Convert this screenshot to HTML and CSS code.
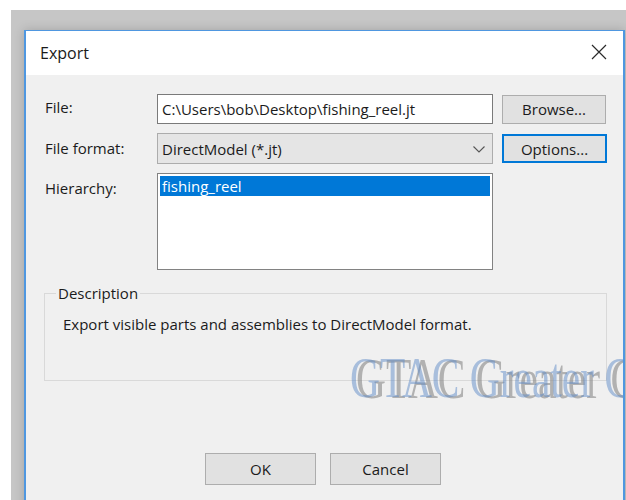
FILE: index.html
```html
<!DOCTYPE html>
<html lang="en">
<head>
<meta charset="utf-8">
<title>Export</title>
<link rel="stylesheet" href="styles.css">
</head>
<body>
<div class="desk">
  <div class="dialog">
    <div class="titlebar">
      <span class="title">Export</span>
      <svg class="close" width="16" height="16" viewBox="0 0 16 16" aria-label="Close">
        <path d="M1 1L15 15M15 1L1 15"/>
      </svg>
    </div>
    <div class="content">
      <div class="form">
        <label class="lbl lbl-file">File:</label>
        <div class="field input">C:\Users\bob\Desktop\fishing_reel.jt</div>
        <button class="btn btn-side">Browse...</button>

        <label class="lbl lbl-row">File format:</label>
        <div class="field select">
          <span>DirectModel (*.jt)</span>
          <svg class="chev" width="12" height="7" viewBox="0 0 12 7"><path d="M0.5 0.5L6 6L11.5 0.5"/></svg>
        </div>
        <button class="btn btn-side btn-focus">Options...</button>

        <label class="lbl lbl-row">Hierarchy:</label>
        <div class="field list">
          <div class="item selected">fishing_reel</div>
        </div>
      </div>

      <fieldset class="group">
        <legend>Description</legend>
        <p class="desc">Export visible parts and assemblies to DirectModel format.</p>
      </fieldset>

      <div class="actions">
        <button class="btn btn-main">OK</button>
        <button class="btn btn-main">Cancel</button>
      </div>
    </div>

    <div class="watermark wm-grey">GTAC Greater China</div>
    <div class="watermark wm-blue">GTAC Greater China</div>
  </div>
</div>
</body>
</html>
```
FILE: styles.css
```css
* {
  box-sizing: border-box;
}

html,
body {
  margin: 0;
}

body {
  width: 626px;
  height: 500px;
  overflow: hidden;
  background: #ffffff;
  font-family: "Open Sans", "Noto Sans", sans-serif;
  font-size: 15px;
  line-height: 20px;
  color: #1b1b1b;
}

/* grey desktop behind the dialog */
.desk {
  margin: 10px 0 0 11px;
  height: 490px;
  padding: 20px 1px 0 13px;
  background: #c6c6c6;
  overflow: hidden;
}

.dialog {
  position: relative;
  width: 601px;
  height: 480px;
  background: #f0f0f0;
  border: 2px solid #4f97e0;
  border-top-width: 1px;
  box-shadow: 0 0 10px rgba(0, 0, 0, 0.18);
  overflow: hidden;
}

.titlebar {
  height: 44px;
  background: #ffffff;
  display: flex;
  align-items: center;
  justify-content: space-between;
  padding: 0 16px 0 14px;
}

.title {
  font-size: 16px;
  color: #1a1a1a;
}

.close {
  fill: none;
  stroke: #2b2b2b;
  stroke-width: 1.2;
  margin-top: -2px;
}

.content {
  padding: 19px 16px 0 18px;
}

.form {
  display: grid;
  grid-template-columns: 113px 336px 114px;
  grid-template-rows: 30px 31px 97px;
  row-gap: 9px;
}

.lbl {
  padding-top: 5px;
  padding-left: 1px;
}

.lbl-file {
  padding-top: 3px;
}

.field {
  display: flex;
  align-items: center;
  padding-left: 4px;
  white-space: nowrap;
}

.input {
  background: #ffffff;
  border: 1px solid #7a7a7a;
}

.select {
  justify-content: space-between;
  padding-right: 7px;
  background: #e5e5e5;
  border: 1px solid #acacac;
}

.chev {
  fill: none;
  stroke: #555555;
  stroke-width: 1.1;
  margin-top: 1px;
}

.list {
  display: block;
  padding: 2px;
  background: #ffffff;
  border: 1px solid #828282;
}

.item {
  height: 20px;
  padding-left: 2px;
  line-height: 20px;
}

.item.selected {
  background: #0078d7;
  color: #ffffff;
}

.btn {
  font: inherit;
  color: #1b1b1b;
  background: #e1e1e1;
  border: 1px solid #adadad;
  padding: 0;
  margin: 0;
}

.btn-side {
  width: 104px;
  height: 29px;
  margin-left: 9px;
  align-self: center;
}

.btn-focus {
  border: 2px solid #0078d7;
  width: 105px;
}

.group {
  margin: 13px 0 0;
  padding: 11px 10px 46px 18px;
  border: 1px solid #d9d9d9;
  min-width: 0;
}

.group legend {
  margin-left: -7px;
  padding: 0 2px;
}

.desc {
  margin: 0;
}

.actions {
  display: flex;
  justify-content: center;
  gap: 14px;
  margin-top: 72px;
  padding-right: 5px;
}

.btn-main {
  width: 111px;
  height: 32px;
}

/* stamped watermark lettering over the lower right */
.watermark {
  position: absolute;
  left: 330px;
  top: 320px;
  font-family: "Liberation Serif", "DejaVu Serif", serif;
  font-size: 56px;
  line-height: 56px;
  white-space: nowrap;
  transform: scaleX(0.74);
  transform-origin: left top;
  pointer-events: none;
}

.wm-grey {
  color: rgba(135, 135, 135, 0.6);
}

.wm-blue {
  margin-left: -6px;
  margin-top: -1px;
  color: rgba(95, 140, 200, 0.5);
}
```
